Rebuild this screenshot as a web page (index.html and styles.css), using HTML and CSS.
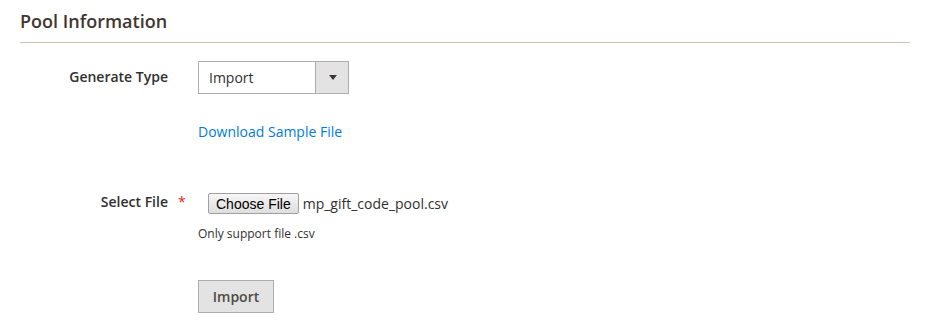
FILE: index.html
```html
<!DOCTYPE html>
<html lang="en">

<head>
  <meta charset="UTF-8">
  <title>Pool Information</title>
  <link rel="stylesheet" href="styles.css">
</head>

<body>
  <div class="fieldset">
    <h2 class="legend">Pool Information</h2>

    <div class="field">
      <label class="field-label">Generate Type</label>
      <div class="control">
        <div class="select-box">
          <span class="select-value">Import</span>
          <span class="select-arrow"></span>
        </div>
      </div>
    </div>

    <div class="field link-row">
      <div class="field-label"></div>
      <div class="control">
        <a class="sample-link" href="#">Download Sample File</a>
      </div>
    </div>

    <div class="field file-row">
      <label class="field-label required">Select File</label>
      <div class="control">
        <div class="file-input">
          <button class="choose-btn" type="button">Choose File</button>
          <span class="file-name">mp_gift_code_pool.csv</span>
        </div>
        <div class="note">Only support file .csv</div>
      </div>
    </div>

    <div class="field button-row">
      <div class="field-label"></div>
      <div class="control">
        <button class="action-import" type="button">Import</button>
      </div>
    </div>
  </div>
</body>

</html>
```

FILE: styles.css
```css
body {
  margin: 0;
  padding: 0 15px 0 20px;
  font-family: "Open Sans", Arial, sans-serif;
  color: #303030;
  background: #fff;
}

.legend {
  margin: 0;
  padding: 10px 0 10px;
  font-size: 18px;
  font-weight: 600;
  color: #41362f;
  line-height: 22px;
  border-bottom: 1px solid #cac3b4;
}

.field {
  display: flex;
  align-items: flex-start;
}

.field-label {
  width: 148px;
  flex: none;
  padding-right: 30px;
  text-align: right;
  font-size: 14px;
  font-weight: 600;
  line-height: 20px;
  position: relative;
}

.field:first-of-type {
  margin-top: 18px;
}

.field .field-label {
  padding-top: 6px;
}

.select-box {
  display: flex;
  width: 149px;
  height: 31px;
  border: 1px solid #adadad;
}

.select-value {
  flex: 1;
  padding: 0 10px;
  font-size: 14px;
  line-height: 31px;
  color: #303030;
}

.select-arrow {
  width: 32px;
  border-left: 1px solid #adadad;
  background: #e3e3e3;
  position: relative;
}

.select-arrow::after {
  content: "";
  position: absolute;
  left: 13px;
  top: 13px;
  border-left: 4px solid transparent;
  border-right: 4px solid transparent;
  border-top: 5px solid #41362f;
}

.link-row {
  margin-top: 26px;
}

.link-row .field-label,
.button-row .field-label {
  padding-top: 0;
}

.sample-link {
  font-size: 14px;
  line-height: 20px;
  color: #007bdb;
  text-decoration: none;
}

.file-row {
  margin-top: 50px;
}

.file-row .field-label {
  padding-top: 0;
}

.required::after {
  content: "*";
  position: absolute;
  left: 158px;
  top: 0;
  color: #e22626;
  font-size: 14px;
  font-weight: 400;
}

.file-input {
  display: flex;
  align-items: center;
  margin-left: 10px;
  margin-top: 1px;
}

.choose-btn {
  font-family: "Liberation Sans", Arial, sans-serif;
  font-size: 14px;
  height: 21px;
  padding: 0 7px;
  color: #000;
  border: 1px solid #a0a0a0;
  border-radius: 2px;
  background: linear-gradient(#f6f6f6, #dedede);
}

.file-name {
  margin-left: 4px;
  font-size: 14px;
  color: #303030;
}

.note {
  margin-top: 12px;
  font-size: 12px;
  line-height: 16px;
  color: #303030;
}

.button-row {
  margin-top: 38px;
}

.action-import {
  font-family: "Open Sans", Arial, sans-serif;
  font-size: 14px;
  font-weight: 600;
  color: #514943;
  width: 76px;
  height: 33px;
  background: #e3e3e3;
  border: 1px solid #adadad;
  padding: 0;
}
```
